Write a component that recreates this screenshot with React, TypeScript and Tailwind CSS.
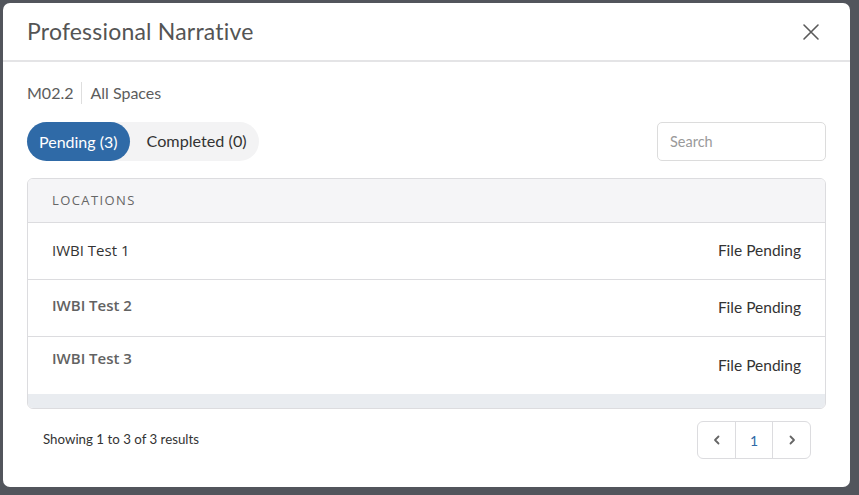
import React, { useState } from 'react';

const rows = [
  { name: 'IWBI Test 1', status: 'File Pending', strong: false, shift: '-translate-y-[1.5px]' },
  { name: 'IWBI Test 2', status: 'File Pending', strong: true, shift: '-translate-y-[3.5px]' },
  { name: 'IWBI Test 3', status: 'File Pending', strong: true, shift: '-translate-y-[7.5px]' },
];

const App: React.FC = () => {
  const [tab, setTab] = useState<'pending' | 'completed'>('pending');
  const [query, setQuery] = useState('');

  return (
    <div className="w-[859px] h-[495px] bg-[#52555c] p-[3px] overflow-hidden font-['Lato',sans-serif]">
      <div className="w-[847px] h-[484px] bg-white rounded-[7px] flex flex-col">
        {/* header */}
        <div className="h-[59px] flex items-center justify-between pl-6 pr-[30px] border-b-2 border-[#e4e4e6]">
          <h1 className="text-[23px] text-[#545454] tracking-[0.2px]">Professional Narrative</h1>
          <button className="text-[#5a5a5a]">
            <svg width="18" height="18" viewBox="0 0 18 18" fill="none" stroke="currentColor" strokeWidth="1.6" strokeLinecap="round">
              <path d="M2 2L16 16M16 2L2 16" />
            </svg>
          </button>
        </div>

        {/* body */}
        <div className="px-6 pt-[20px] flex flex-col">
          <div className="flex items-center text-[16px] text-[#5c5c5c] h-[22px]">
            <span>M02.2</span>
            <span className="mx-[8px] w-px h-[22px] bg-[#dedede]"></span>
            <span>All Spaces</span>
          </div>

          <div className="flex items-center justify-between mt-[18px]">
            <div className="flex bg-[#f3f3f4] rounded-full h-[39px]">
              <button
                onClick={() => setTab('pending')}
                className={`px-3 rounded-full text-[16px] ${tab === 'pending' ? 'bg-[#2f6aa7] text-white' : 'text-[#333]'}`}
              >
                Pending (3)
              </button>
              <button
                onClick={() => setTab('completed')}
                className={`pl-[17px] pr-[12px] rounded-full text-[16.2px] ${tab === 'completed' ? 'bg-[#2f6aa7] text-white' : 'text-[#333]'}`}
              >
                Completed (0)
              </button>
            </div>
            <input
              value={query}
              onChange={(e) => setQuery(e.target.value)}
              placeholder="Search"
              className="w-[169px] h-[39px] border border-[#dcdcdc] rounded-[5px] px-3 text-[14.5px] placeholder-[#9a9a9a] outline-none"
            />
          </div>

          <div className="mt-[17px] border border-[#dcdcdf] rounded-[6px] overflow-hidden font-['Open_Sans',sans-serif]">
            <div className="h-[44px] bg-[#f5f5f7] border-b border-[#dcdcdf] flex items-center px-6 text-[13px] tracking-[1.4px] text-[#666]">
              LOCATIONS
            </div>
            {rows.map((r, i) => (
              <div
                key={i}
                className={`h-[57px] flex items-center justify-between px-6 ${i < rows.length - 1 ? 'border-b border-[#dcdcdf]' : ''}`}
              >
                <span className={`${r.shift} text-[15px] ${r.strong ? 'font-semibold text-[#626262]' : 'text-[#333]'}`}>{r.name}</span>
                <span className="text-[#333] font-['Lato',sans-serif] text-[15.5px]">{r.status}</span>
              </div>
            ))}
            <div className="h-[14px] bg-[#e9ecf0]"></div>
          </div>

          <div className="flex items-center justify-between pl-4 pr-[15px] mt-[12px]">
            <span className="text-[13.3px] text-[#333]">Showing 1 to 3 of 3 results</span>
            <div className="flex h-[38px] border border-[#dcdcdf] rounded-[6px] overflow-hidden">
              <button className="w-[37px] flex items-center justify-center text-[#666]">
                <svg width="10" height="10" viewBox="0 0 10 10" fill="none" stroke="currentColor" strokeWidth="1.8" strokeLinecap="round" strokeLinejoin="round">
                  <path d="M6.5 1.5L3 5l3.5 3.5" />
                </svg>
              </button>
              <button className="w-[38px] border-x border-[#dcdcdf] text-[14px] text-[#2f6aa7]">1</button>
              <button className="w-[37px] flex items-center justify-center text-[#666]">
                <svg width="10" height="10" viewBox="0 0 10 10" fill="none" stroke="currentColor" strokeWidth="1.8" strokeLinecap="round" strokeLinejoin="round">
                  <path d="M3.5 1.5L7 5l-3.5 3.5" />
                </svg>
              </button>
            </div>
          </div>
        </div>
      </div>
    </div>
  );
};

export default App;
